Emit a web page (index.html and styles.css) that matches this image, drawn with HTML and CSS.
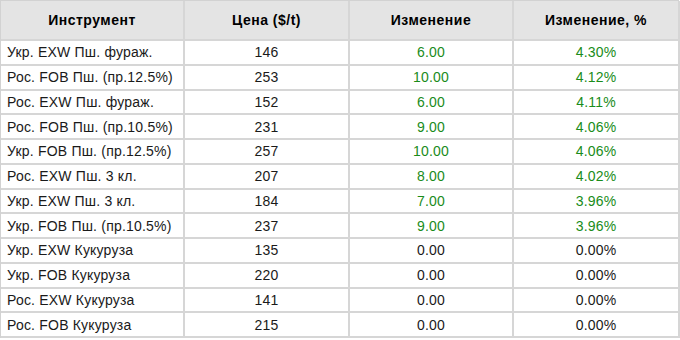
FILE: index.html
```html
<!DOCTYPE html>
<html lang="ru">
<head>
<meta charset="utf-8">
<link rel="stylesheet" href="styles.css">
</head>
<body>
<div class="grid">
  <div class="cell head">Инструмент</div>
  <div class="cell head">Цена ($/t)</div>
  <div class="cell head">Изменение</div>
  <div class="cell head">Изменение, %</div>

  <div class="cell name">Укр. EXW Пш. фураж.</div><div class="cell">146</div><div class="cell up">6.00</div><div class="cell up">4.30%</div>
  <div class="cell name">Рос. FOB Пш. (пр.12.5%)</div><div class="cell">253</div><div class="cell up">10.00</div><div class="cell up">4.12%</div>
  <div class="cell name">Рос. EXW Пш. фураж.</div><div class="cell">152</div><div class="cell up">6.00</div><div class="cell up">4.11%</div>
  <div class="cell name">Рос. FOB Пш. (пр.10.5%)</div><div class="cell">231</div><div class="cell up">9.00</div><div class="cell up">4.06%</div>
  <div class="cell name">Укр. FOB Пш. (пр.12.5%)</div><div class="cell">257</div><div class="cell up">10.00</div><div class="cell up">4.06%</div>
  <div class="cell name">Рос. EXW Пш. 3 кл.</div><div class="cell">207</div><div class="cell up">8.00</div><div class="cell up">4.02%</div>
  <div class="cell name">Укр. EXW Пш. 3 кл.</div><div class="cell">184</div><div class="cell up">7.00</div><div class="cell up">3.96%</div>
  <div class="cell name">Укр. FOB Пш. (пр.10.5%)</div><div class="cell">237</div><div class="cell up">9.00</div><div class="cell up">3.96%</div>
  <div class="cell name">Укр. EXW Кукуруза</div><div class="cell">135</div><div class="cell">0.00</div><div class="cell">0.00%</div>
  <div class="cell name">Укр. FOB Кукуруза</div><div class="cell">220</div><div class="cell">0.00</div><div class="cell">0.00%</div>
  <div class="cell name">Рос. EXW Кукуруза</div><div class="cell">141</div><div class="cell">0.00</div><div class="cell">0.00%</div>
  <div class="cell name">Рос. FOB Кукуруза</div><div class="cell">215</div><div class="cell">0.00</div><div class="cell">0.00%</div>
</div>
</body>
</html>
```
FILE: styles.css
```css
html, body {
  margin: 0;
  padding: 0;
  background: #ffffff;
}
.grid {
  display: grid;
  grid-template-columns: 184px 165px 164px 166px;
  grid-template-rows: 40px repeat(12, 24.75px);
  width: 679px;
  border-top: 1px solid #d2d2d2;
  border-left: 1px solid #d2d2d2;
  box-sizing: border-box;
  font-family: "Liberation Sans", Arial, sans-serif;
  font-size: 14px;
  letter-spacing: 0.2px;
  color: #1a1a1a;
}
.cell {
  display: flex;
  align-items: center;
  justify-content: center;
  border-right: 2px solid #d6d6d6;
  border-bottom: 2px solid #d6d6d6;
  white-space: nowrap;
}
.head {
  background: #e4e4e4;
  font-weight: bold;
  letter-spacing: 0.5px;
  color: #000000;
}
.name {
  justify-content: flex-start;
  padding-left: 6px;
}
.up {
  color: #1a8c1a;
}
```
